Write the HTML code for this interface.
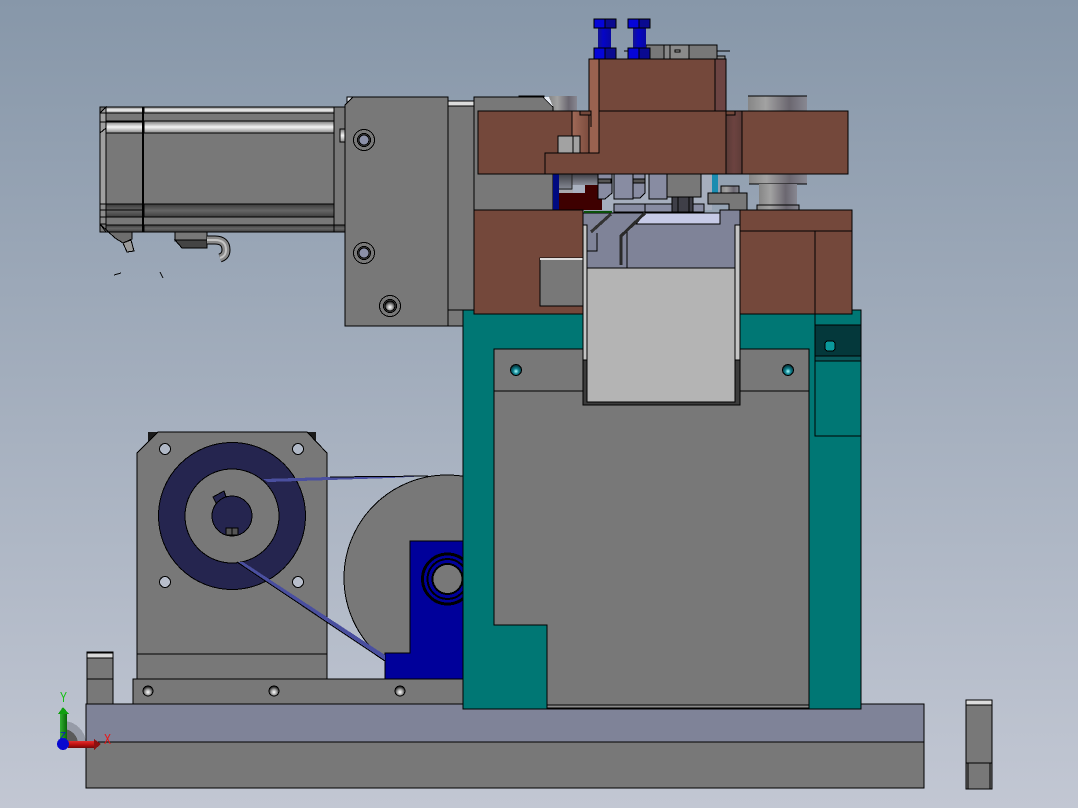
<!DOCTYPE html>
<html>
<head>
<meta charset="utf-8">
<style>
html,body{margin:0;padding:0;width:1078px;height:808px;overflow:hidden;background:#8f9eb0}
svg{display:block}
</style>
</head>
<body>
<svg width="1078" height="808" viewBox="0 0 1078 808" xmlns="http://www.w3.org/2000/svg" shape-rendering="crispEdges">
<defs>
<linearGradient id="bg" x1="0" y1="0" x2="0" y2="1"><stop offset="0" stop-color="#8797a9"/><stop offset="1" stop-color="#c2c7d3"/></linearGradient>
<linearGradient id="cyl" x1="0" y1="0" x2="1" y2="0"><stop offset="0" stop-color="#868686"/><stop offset=".3" stop-color="#a2a2a2"/><stop offset=".7" stop-color="#6b6770"/><stop offset="1" stop-color="#888892"/></linearGradient>
<linearGradient id="shine" x1="0" y1="0" x2="0" y2="1"><stop offset="0" stop-color="#777"/><stop offset=".5" stop-color="#f4f4f4"/><stop offset="1" stop-color="#888"/></linearGradient>
<linearGradient id="dark" x1="0" y1="0" x2="0" y2="1"><stop offset="0" stop-color="#3a3a3a"/><stop offset=".5" stop-color="#666"/><stop offset="1" stop-color="#3e3e3e"/></linearGradient>
<linearGradient id="gv" x1="0" y1="0" x2="0" y2="1"><stop offset="0" stop-color="#3e3e44"/><stop offset="1" stop-color="#8a8e9a"/></linearGradient>
<linearGradient id="blue" x1="0" y1="0" x2="1" y2="0"><stop offset="0" stop-color="#14148c"/><stop offset=".4" stop-color="#0505c8"/><stop offset="1" stop-color="#0808a0"/></linearGradient>
<linearGradient id="bn" x1="0" y1="0" x2="1" y2="0"><stop offset="0" stop-color="#a06a58"/><stop offset="1" stop-color="#7d4c3e"/></linearGradient>
<linearGradient id="bd" x1="0" y1="0" x2="1" y2="0"><stop offset="0" stop-color="#5a3a36"/><stop offset=".5" stop-color="#6c4340"/><stop offset="1" stop-color="#5e3c38"/></linearGradient>
<linearGradient id="red" x1="0" y1="0" x2="0" y2="1"><stop offset="0" stop-color="#e03030"/><stop offset=".5" stop-color="#c01010"/><stop offset="1" stop-color="#700808"/></linearGradient>
<linearGradient id="grn" x1="0" y1="0" x2="1" y2="0"><stop offset="0" stop-color="#30b030"/><stop offset="1" stop-color="#086808"/></linearGradient>
<radialGradient id="hole" cx=".5" cy=".62" r=".55"><stop offset="0" stop-color="#fff"/><stop offset=".45" stop-color="#aaa"/><stop offset="1" stop-color="#222"/></radialGradient>
<radialGradient id="thole" cx=".5" cy=".62" r=".55"><stop offset="0" stop-color="#aff"/><stop offset=".45" stop-color="#0f8290"/><stop offset="1" stop-color="#043238"/></radialGradient>
</defs>
<rect width="1078" height="808" fill="url(#bg)"/>

<g stroke="#000" stroke-width="1">
<!-- motor -->
<rect x="100" y="107" width="43" height="125" fill="#787878"/>
<rect x="143" y="107" width="202" height="125" fill="#787878"/>
<polygon points="100,113 106,107 106,224 100,224" fill="#a0a0a0"/>
<rect x="106" y="107" width="37" height="6" fill="url(#shine)"/>
<rect x="106" y="121" width="37" height="12" fill="url(#shine)"/>
<rect x="144" y="107" width="190" height="6" fill="url(#shine)"/>
<rect x="144" y="121" width="190" height="12" fill="url(#shine)"/>
<line x1="100" y1="113" x2="143" y2="113"/>
<line x1="100" y1="122" x2="143" y2="122"/>
<line x1="100" y1="133" x2="106" y2="128"/>
<rect x="106" y="204" width="37" height="13" fill="url(#dark)"/>
<rect x="144" y="204" width="190" height="13" fill="url(#dark)"/>
<rect x="106" y="225" width="37" height="7" fill="url(#dark)"/>
<rect x="144" y="225" width="201" height="7" fill="url(#dark)"/>
<polygon points="100,204 106,204 106,224 100,224" fill="#8c8c8c"/>
<line x1="100" y1="210" x2="143" y2="210"/>
<line x1="100" y1="217" x2="143" y2="217"/>
<line x1="334" y1="107" x2="334" y2="232"/>
<line x1="143" y1="107" x2="143" y2="232" stroke-width="2"/>
<rect x="340" y="129" width="5" height="13" fill="url(#shine)"/>
<polygon points="100,224 106,232 132,232 132,239 123,243 115,238" fill="#6e6e6e"/>
<polygon points="123,243 131,240 134,251 127,252" fill="#9a9a9a"/>
<!-- connector -->
<rect x="175" y="232" width="32" height="9" fill="#787878"/>
<polygon points="175,240 182,248 207,248 207,240" fill="#444"/>
<g fill="none" shape-rendering="auto">
<path d="M207 240 H215 Q226 240 226 250 Q226 256 220 258" stroke="#000" stroke-width="9"/>
<path d="M207 240 H215 Q226 240 226 250 Q226 256 220 258" stroke="#8a8a8a" stroke-width="7"/>
<path d="M207 240 H215 Q226 240 226 250 Q226 256 220 258" stroke="#c4c4c4" stroke-width="2"/>
</g>
<line x1="114" y1="275" x2="121" y2="273"/>
<line x1="160" y1="272" x2="163" y2="278"/>

<!-- rear gray -->
<rect x="448" y="105" width="27" height="205" fill="#787878"/>
<rect x="448" y="101" width="27" height="5" fill="#ddd"/>
<rect x="448" y="310" width="16" height="16" fill="#787878"/>
<polygon points="347,104 347,97 353,97" fill="#e4e8f0"/>
<polygon points="345,105 353,97 448,97 448,326 345,326" fill="#787878"/>
</g>
<g fill="none" stroke="#000">
<circle cx="364" cy="140" r="10.5"/><circle cx="364" cy="140" r="6.5" fill="#555"/><circle cx="364" cy="140" r="5" fill="#8b90a8"/>
<circle cx="364" cy="253" r="10.5"/><circle cx="364" cy="253" r="6.5" fill="#555"/><circle cx="364" cy="253" r="5" fill="#8b90a8"/>
<circle cx="390" cy="306" r="10.5"/><circle cx="390" cy="306" r="6.5" fill="#555"/><circle cx="390" cy="306" r="5" fill="url(#hole)"/>
</g>

<g stroke="#000">
<!-- rear block behind upper tooling -->
<rect x="549" y="96" width="28" height="16" fill="url(#cyl)" stroke="none"/>
<polygon points="474,97 543,97 553,107 553,210 474,210" fill="#787878"/>
<polygon points="543,97 549,97 553,107" fill="#e8ecf4" stroke="none"/>
<rect x="519" y="96" width="25" height="1" fill="#000"/>
<!-- right cylinder -->
<rect x="748" y="96" width="59" height="15" fill="url(#cyl)" stroke="none"/>
<line x1="748" y1="96" x2="807" y2="96"/>
<rect x="749" y="174" width="58" height="10" fill="url(#cyl)" stroke="none"/>
<line x1="749" y1="184" x2="807" y2="184"/>
<rect x="759" y="184" width="38" height="21" fill="url(#cyl)" stroke="none"/>
<rect x="757" y="205" width="42" height="5" fill="url(#cyl)"/>
</g>

<!-- mid gap parts -->
<g stroke="#000">
<rect x="553" y="174" width="6" height="36" fill="#000a80" stroke="none"/>
<rect x="559" y="174" width="43" height="36" fill="#a9b1c0" stroke="none"/>
<rect x="559" y="174" width="13" height="16" fill="url(#gv)" stroke="none"/>
<rect x="572" y="174" width="26" height="11" fill="url(#gv)" stroke="none"/>
<rect x="559" y="190" width="14" height="3" fill="#a9a9ae" stroke="none"/>
<polygon points="559,193 585,193 585,185 598,185 602,198 602,210 559,210" fill="#3e0000" stroke="none"/>
<polyline points="572,174 572,189 559,189" fill="none" stroke="#222"/>
<rect x="602" y="174" width="110" height="36" fill="#a6aebd" stroke="none"/>
<polygon points="598,174 612,174 612,193 605,199 598,199" fill="#888ca2"/>
<rect x="598" y="179" width="13" height="4" fill="#555"/>
<rect x="614" y="174" width="19" height="25" fill="#888ca2"/>
<polygon points="633,174 645,174 645,193 640,198 633,198" fill="#888ca2"/>
<rect x="633" y="179" width="12" height="4" fill="#555"/>
<rect x="649" y="174" width="18" height="25" fill="#888ca2"/>
<rect x="614" y="204" width="90" height="8" fill="#888ca2"/>
<line x1="645" y1="204" x2="645" y2="212"/>
<rect x="667" y="174" width="34" height="23" fill="#787878"/>
<rect x="672" y="197" width="21" height="15" fill="#3f3f48"/>
<line x1="678" y1="197" x2="678" y2="212"/><line x1="689" y1="197" x2="689" y2="212"/>
<rect x="712" y="174" width="6" height="23" fill="#1a8cb0" stroke="none"/>
<rect x="721" y="186" width="18" height="7" fill="url(#cyl)"/>
<polygon points="708,193 747,193 747,210 729,210 729,204 708,204" fill="#787878"/>
</g>

<!-- big pulley -->
<circle cx="447" cy="578" r="103" fill="#787878" stroke="#000"/>
<polygon points="410,541 464,541 464,679 385,679 385,653 410,653" fill="#00009a" stroke="#000"/>
<circle cx="447.5" cy="579" r="25" fill="none" stroke="#000" stroke-width="3"/>
<circle cx="447.5" cy="579" r="20" fill="none" stroke="#000" stroke-width="2"/>
<circle cx="447.5" cy="579" r="15" fill="#787878" stroke="#000" stroke-width="2"/>

<!-- base plate etc -->
<g stroke="#000">
<rect x="87" y="652" width="26" height="52" fill="#787878"/>
<rect x="87" y="653" width="26" height="5" fill="#d8d8d8"/>
<line x1="87" y1="679" x2="113" y2="679"/>
<rect x="966" y="700" width="26" height="89" fill="#787878"/>
<rect x="966" y="700" width="26" height="5" fill="#dcdcdc"/>
<line x1="966" y1="763" x2="992" y2="763"/>
<line x1="968" y1="763" x2="968" y2="789"/><line x1="990" y1="763" x2="990" y2="789"/>
<rect x="86" y="704" width="838" height="38" fill="#7f8398"/>
<rect x="86" y="742" width="838" height="46" fill="#787878"/>
<rect x="133" y="679" width="330" height="25" fill="#787878"/>
</g>
<circle cx="148" cy="691" r="5" fill="url(#hole)" stroke="#000"/>
<circle cx="274" cy="691" r="5" fill="url(#hole)" stroke="#000"/>
<circle cx="400" cy="691" r="5" fill="url(#hole)" stroke="#000"/>

<!-- motor plate -->
<polygon points="148,432 158,432 158,443 148,443" fill="#1a1a1a"/>
<polygon points="307,432 316,432 316,443 307,443" fill="#1a1a1a"/>
<polygon points="137,453 158,432 307,432 327,453 327,679 137,679" fill="#787878" stroke="#000"/>
<line x1="137" y1="654" x2="327" y2="654" stroke="#000"/>
<circle cx="165" cy="449" r="5.5" fill="#b0b8c6" stroke="#000"/>
<circle cx="298" cy="449" r="5.5" fill="#b0b8c6" stroke="#000"/>
<circle cx="165" cy="582" r="5.5" fill="#b8becb" stroke="#000"/>
<circle cx="298" cy="582" r="5.5" fill="#b8becb" stroke="#000"/>
<circle cx="232" cy="516" r="73.5" fill="#25254f" stroke="#000"/>
<circle cx="232" cy="516" r="47" fill="#787878" stroke="#000"/>
<polygon points="213,497 224,491 226,497 216,503" fill="#25254f" stroke="#000"/>
<circle cx="232" cy="516" r="20" fill="#25254f" stroke="#000"/>
<rect x="226" y="528" width="6" height="7" fill="#555" stroke="#000"/>
<rect x="232" y="528" width="6" height="7" fill="#555" stroke="#000"/>
<!-- belts -->
<polygon points="263,479 330,477 428,476 390,478 330,480 268,482" fill="#4a4f9f"/>
<line x1="330" y1="477" x2="428" y2="476" stroke="#000"/>
<polygon points="237,562 243,562 385,655 385,661" fill="#4a4f9f"/>
<line x1="237" y1="562" x2="385" y2="661" stroke="#000"/>

<!-- teal frame -->
<g stroke="#000">
<rect x="463" y="310" width="398" height="399" fill="#007774"/>
<polygon points="494,349 809,349 809,706 547,706 547,625 494,625" fill="#787878"/>
<rect x="547" y="705" width="262" height="3" fill="#8a8a8a"/>
<line x1="494" y1="391" x2="809" y2="391"/>
<rect x="815" y="310" width="46" height="126" fill="#007774"/>
<rect x="815" y="325" width="46" height="31" fill="#04383b"/>
<rect x="815" y="356" width="46" height="5" fill="#0a5a5c"/>
<rect x="825" y="341" width="10" height="10" rx="3" fill="#0a9a9c"/>
</g>
<circle cx="516" cy="370" r="5.5" fill="url(#thole)" stroke="#000"/>
<circle cx="788" cy="370" r="5.5" fill="url(#thole)" stroke="#000"/>

<!-- lower brown and center -->
<g stroke="#000">
<rect x="474" y="210" width="109" height="104" fill="#74483b"/>
<rect x="540" y="258" width="43" height="48" fill="#787878"/>
<rect x="540" y="258" width="43" height="2" fill="#ddd" stroke="none"/>
<rect x="740" y="210" width="112" height="104" fill="#74483b"/>
<line x1="740" y1="231" x2="852" y2="231"/>
<line x1="815" y1="231" x2="815" y2="318"/>
<polygon points="583,213 720,213 720,210 740,210 740,405 583,405" fill="#7f8398"/>
<rect x="583" y="360" width="157" height="45" fill="#3c3c3c"/>
<rect x="583" y="225" width="4" height="135" fill="#c4c4c4"/>
<rect x="735" y="225" width="5" height="135" fill="#c4c4c4"/>
<rect x="587" y="268" width="148" height="134" fill="#b4b4b4"/>
<polygon points="645,213 720,213 720,224 636,224" fill="#c6cae6"/>
<line x1="627" y1="231" x2="627" y2="268"/>
<polyline points="597,233 597,251 587,251" fill="none"/>
<line x1="591" y1="232" x2="611" y2="214" stroke="#333" stroke-width="3"/>
<polyline points="621,265 621,236 645,213" fill="none" stroke="#2a2a2a" stroke-width="3"/>
<rect x="584" y="211" width="28" height="2" fill="#0a500a" stroke="none"/>
</g>

<!-- upper tooling -->
<g stroke="#000">
<rect x="478" y="111" width="94" height="63" fill="#74483b"/>
<rect x="572" y="111" width="17" height="42" fill="url(#bn)"/>
<rect x="589" y="59" width="10" height="94" fill="#9a6250"/>
<rect x="599" y="59" width="116" height="52" fill="#74483b"/>
<rect x="715" y="59" width="11" height="52" fill="#6c4442"/>
<polygon points="599,111 726,111 726,174 545,174 545,153 599,153" fill="#74483b"/>
<rect x="726" y="111" width="16" height="63" fill="url(#bd)"/>
<rect x="742" y="111" width="106" height="63" fill="#74483b"/>
<rect x="726" y="111" width="9" height="4" fill="#74483b"/>
<rect x="580" y="111" width="11" height="4" fill="#74483b"/>
<line x1="591" y1="115" x2="591" y2="127"/>
<rect x="558" y="136" width="22" height="17" fill="#a2a2a2"/>
<line x1="573" y1="136" x2="573" y2="153"/>
<!-- small top part -->
<rect x="646" y="45" width="71" height="14" fill="#787878"/>
<rect x="664" y="45" width="6" height="14" fill="#888"/>
<rect x="670" y="45" width="19" height="14" fill="#8a8a8a"/>
<rect x="675" y="50" width="5" height="2" fill="#aaa"/>
<line x1="624" y1="51" x2="646" y2="51"/>
<line x1="717" y1="51" x2="730" y2="51"/>
<rect x="717" y="56" width="8" height="3" fill="#888"/>
<!-- bolts -->
<rect x="598" y="28" width="13" height="20" fill="url(#blue)" stroke="none"/>
<rect x="633" y="28" width="13" height="20" fill="url(#blue)" stroke="none"/>
<rect x="594" y="19" width="11" height="9" fill="#0505d8"/><rect x="605" y="19" width="11" height="9" fill="#0a0a90"/>
<rect x="594" y="48" width="11" height="11" fill="#0505d8"/><rect x="605" y="48" width="11" height="11" fill="#0a0a90"/>
<rect x="628" y="19" width="11" height="9" fill="#0505d8"/><rect x="639" y="19" width="11" height="9" fill="#0a0a90"/>
<rect x="628" y="48" width="11" height="11" fill="#0505d8"/><rect x="639" y="48" width="11" height="11" fill="#0a0a90"/>
</g>

<!-- triad -->
<path d="M63 721 A23 23 0 0 1 86 744 L63 744 Z" fill="#8a8d99" opacity=".75"/>
<path d="M63 729 A15 15 0 0 1 78 744 L63 744 Z" fill="#5a5a5a"/>
<rect x="60" y="713" width="7" height="29" fill="url(#grn)"/>
<polygon points="63,707 69,714 58,714" fill="#10a010"/>
<rect x="68" y="741" width="27" height="7" fill="url(#red)"/>
<polygon points="94,739 101,744 94,750" fill="#8a1010"/>
<circle cx="63" cy="744" r="6" fill="#0808d0"/>
<g font-family="'Liberation Sans',sans-serif" shape-rendering="auto">
<text x="60" y="702" font-size="15" textLength="7" lengthAdjust="spacingAndGlyphs" fill="#10c010">Y</text>
<text x="104" y="744" font-size="15" textLength="7" lengthAdjust="spacingAndGlyphs" fill="#f01010">X</text>
<text x="60" y="739" font-size="10" textLength="6" lengthAdjust="spacingAndGlyphs" fill="#1010d0">Z</text>
</g>
</svg>
</body>
</html>
